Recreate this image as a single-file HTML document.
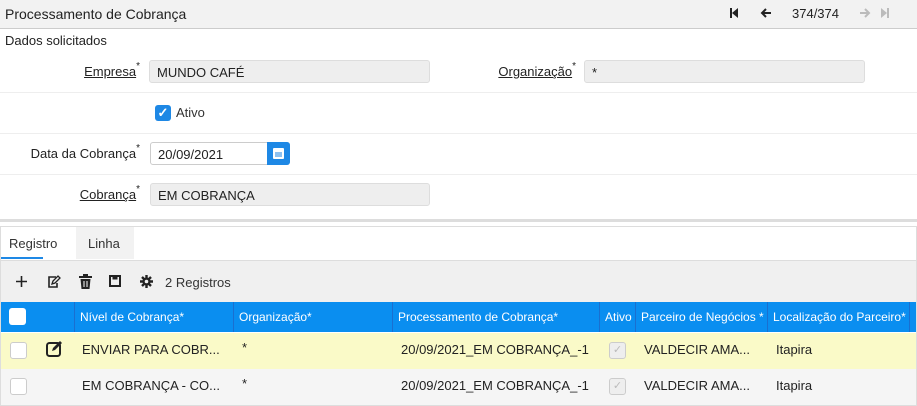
<!DOCTYPE html><html><head><style>
*{box-sizing:border-box;margin:0;padding:0}
body{width:917px;height:405px;overflow:hidden;font-family:"Liberation Sans",sans-serif;font-size:13px;color:#333;background:#fff;position:relative}
.a{position:absolute}
.inp{position:absolute;height:23px;border:1px solid #ddd;border-radius:3px;background:#eee;padding:4px 7px;font-size:13px;color:#222}
.lbl{position:absolute;text-align:right;font-size:13px;color:#222}
u{text-decoration:underline}
sup{font-size:10px;vertical-align:top;position:relative;top:-3px}
.hr{position:absolute;left:0;width:917px;height:1px;background:#eee}
.th{position:absolute;top:302px;height:30px;line-height:30px;color:#fff;font-size:12px;padding-left:5px;border-right:1px solid #1a6fd0;white-space:nowrap;overflow:hidden}
.td{position:absolute;font-size:13px;color:#222;white-space:nowrap}
.cb{position:absolute;width:17px;height:17px;border:1px solid #ccc;border-radius:3px;background:#fff}
</style></head><body>
<div class="a" style="left:0;top:0;width:917px;height:29px;background:#f2f2f2;border-bottom:1px solid #ccc"></div>
<div class="a" style="left:5px;top:6px;font-size:14px;color:#222">Processamento de Cobrança</div>
<svg class="a" style="left:728px;top:7px" width="12" height="12"><rect x="2" y="1" width="2" height="10" fill="#222"/><path d="M10 1 L4 6 L10 11Z" fill="#222"/></svg>
<svg class="a" style="left:759px;top:6px" width="14" height="14"><path d="M12 7H3M7 3L3 7L7 11" stroke="#222" stroke-width="2" fill="none"/></svg>
<div class="a" style="left:792px;top:6px;font-size:13px;color:#222">374/374</div>
<svg class="a" style="left:858px;top:6px" width="14" height="14"><path d="M2 7H11M7 3L11 7L7 11" stroke="#bbb" stroke-width="2" fill="none"/></svg>
<svg class="a" style="left:879px;top:7px" width="12" height="12"><rect x="8" y="1" width="2" height="10" fill="#bbb"/><path d="M2 1 L8 6 L2 11Z" fill="#bbb"/></svg>
<div class="a" style="left:5px;top:33px;font-size:13px;color:#222">Dados solicitados</div>
<div class="lbl" style="left:40px;width:100px;top:64px"><u>Empresa</u><sup>*</sup></div>
<div class="inp" style="left:149px;top:60px;width:281px">MUNDO CAFÉ</div>
<div class="lbl" style="left:460px;width:116px;top:64px"><u>Organização</u><sup>*</sup></div>
<div class="inp" style="left:584px;top:60px;width:281px">*</div>
<div class="hr" style="top:92px"></div>
<div class="a" style="left:155px;top:105px;width:16px;height:16px;background:#1e88e5;border-radius:3px;color:#fff;font-size:13px;line-height:16px;text-align:center;font-weight:bold">✓</div>
<div class="a" style="left:176px;top:105px">Ativo</div>
<div class="hr" style="top:133px"></div>
<div class="lbl" style="left:10px;width:130px;top:146px">Data da Cobrança<sup>*</sup></div>
<div class="inp" style="left:150px;top:142px;width:140px;background:#fff;border-color:#ccc">20/09/2021</div>
<div class="a" style="left:267px;top:142px;width:23px;height:23px;background:#1e88e5;border-radius:0 3px 3px 0"><div class="a" style="left:6px;top:6px;width:11px;height:11px;background:#fff;border-radius:1px"></div><div class="a" style="left:8px;top:10px;width:7px;height:5px;background:#8ec1f0"></div></div>
<div class="hr" style="top:174px"></div>
<div class="lbl" style="left:40px;width:100px;top:187px"><u>Cobrança</u><sup>*</sup></div>
<div class="inp" style="left:150px;top:183px;width:280px">EM COBRANÇA</div>
<div class="a" style="left:0;top:219px;width:917px;height:3px;background:#ddd"></div>
<div class="a" style="left:0;top:226px;width:917px;height:180px;border:1px solid #ddd"></div>
<div class="a" style="left:1px;top:227px;width:42px;height:32px;border-bottom:2px solid #1e88e5;background:#fff"></div>
<div class="a" style="left:9px;top:236px">Registro</div>
<div class="a" style="left:76px;top:227px;width:58px;height:32px;background:#f2f2f2"></div>
<div class="a" style="left:88px;top:236px">Linha</div>
<div class="a" style="left:1px;top:260px;width:915px;height:42px;background:#f0f0f0;border-top:1px solid #ddd"></div>
<svg class="a" style="left:16px;top:276px" width="11" height="11"><path d="M5.5 0V11M0 5.5H11" stroke="#222" stroke-width="1.6"/></svg>
<svg class="a" style="left:47px;top:275px" width="14" height="14"><path d="M9 2H2V12H10V8" stroke="#222" stroke-width="1.6" fill="none"/><path d="M5 9L6 6L11 1L13 3L8 8Z" stroke="#222" stroke-width="1.3" fill="none"/></svg>
<svg class="a" style="left:79px;top:274px" width="13" height="15"><rect x="0" y="2" width="13" height="2" fill="#222"/><rect x="4" y="0" width="5" height="2" fill="#222"/><path d="M1.5 5H11.5L10.5 15H2.5Z" fill="#222"/><path d="M5 7V13M8 7V13" stroke="#fff" stroke-width="1"/></svg>
<svg class="a" style="left:109px;top:275px" width="12" height="12"><rect x="1" y="1" width="10" height="10" stroke="#222" stroke-width="2" fill="none"/><rect x="3.5" y="1" width="5" height="3.5" fill="#222"/></svg>
<svg class="a" style="left:140px;top:275px" width="13" height="13"><circle cx="6.5" cy="6.5" r="4" fill="#222"/><path d="M6.5 0V13M0 6.5H13M2 2L11 11M11 2L2 11" stroke="#222" stroke-width="2.4"/><circle cx="6.5" cy="6.5" r="1.8" fill="#f0f0f0"/></svg>
<div class="a" style="left:165px;top:275px">2 Registros</div>
<div class="a" style="left:1px;top:302px;width:915px;height:30px;background:#0a8ef0"></div>
<div class="cb" style="left:9px;top:308px;border:none"></div>
<div class="th" style="left:42px;width:33px"></div>
<div class="th" style="left:75px;width:159px">Nível de Cobrança*</div>
<div class="th" style="left:234px;width:159px">Organização*</div>
<div class="th" style="left:393px;width:207px">Processamento de Cobrança*</div>
<div class="th" style="left:600px;width:36px">Ativo</div>
<div class="th" style="left:636px;width:132px">Parceiro de Negócios *</div>
<div class="th" style="left:768px;width:142px">Localização do Parceiro*</div>
<div class="a" style="left:1px;top:333px;width:915px;height:36px;background:#fafac8"></div>
<div class="a" style="left:1px;top:369px;width:915px;height:36px;background:#f5f5f5"></div>
<div class="cb" style="left:10px;top:342px"></div>
<div class="cb" style="left:10px;top:378px"></div>
<svg class="a" style="left:46px;top:340px" width="20" height="18"><rect x="1" y="3" width="13" height="13" rx="2.5" stroke="#222" stroke-width="2" fill="none"/><path d="M6 11L7 8L14 1L16 3L9 10Z" fill="#222"/></svg>
<div class="td" style="left:82px;top:342px">ENVIAR PARA COBR...</div>
<div class="td" style="left:242px;top:340px">*</div>
<div class="td" style="left:401px;top:342px">20/09/2021_EM COBRANÇA_-1</div>
<div class="cb" style="left:609px;top:342px;background:#eee;color:#bbb;font-size:11px;text-align:center;line-height:15px">✓</div>
<div class="td" style="left:644px;top:342px">VALDECIR AMA...</div>
<div class="td" style="left:776px;top:342px">Itapira</div>
<div class="td" style="left:82px;top:378px">EM COBRANÇA - CO...</div>
<div class="td" style="left:242px;top:376px">*</div>
<div class="td" style="left:401px;top:378px">20/09/2021_EM COBRANÇA_-1</div>
<div class="cb" style="left:609px;top:378px;background:#eee;color:#bbb;font-size:11px;text-align:center;line-height:15px">✓</div>
<div class="td" style="left:644px;top:378px">VALDECIR AMA...</div>
<div class="td" style="left:776px;top:378px">Itapira</div>
</body></html>
